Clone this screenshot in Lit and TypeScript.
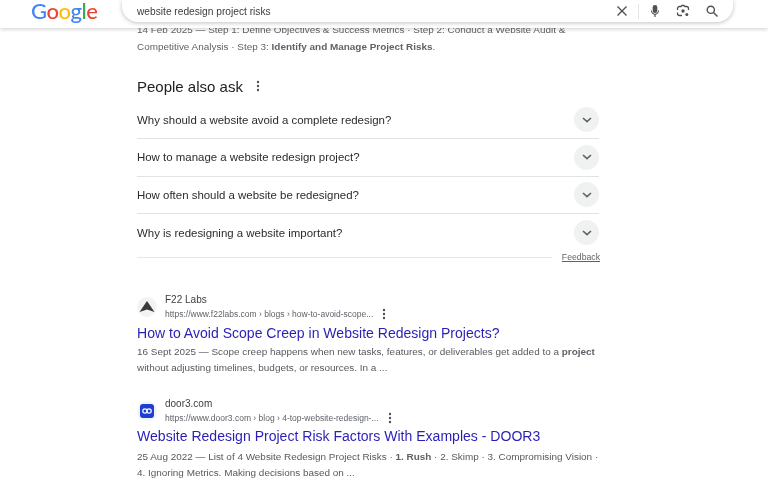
import { LitElement, html, css, svg } from 'lit';
import { customElement } from 'lit/decorators.js';

const questions = [
  'Why should a website avoid a complete redesign?',
  'How to manage a website redesign project?',
  'How often should a website be redesigned?',
  'Why is redesigning a website important?',
];

const dots = svg`<circle cx="2" cy="2" r="1.2"></circle><circle cx="2" cy="6" r="1.2"></circle><circle cx="2" cy="10" r="1.2"></circle>`;

@customElement('app-root')
export class AppRoot extends LitElement {
  static styles = css`
    :host {
      display: block;
      position: relative;
      height: 479px;
      overflow: hidden;
      background: #fff;
      font-family: 'Liberation Sans', Arial, sans-serif;
      color: #202124;
      filter: blur(0.3px);
    }

    /* the search bar sits over the scrolled page */
    .header {
      position: absolute;
      inset: 0 0 auto 0;
      height: 28px;
      background: #fff;
      box-shadow: 0 1px 4px rgba(32, 33, 36, 0.22);
      display: flex;
      align-items: flex-start;
      z-index: 2;
    }
    .logo {
      width: 122px;
      padding: 0 0 0 31px;
      box-sizing: border-box;
      font-family: 'Lato', sans-serif;
      font-size: 22px;
      font-weight: 500;
      line-height: 21px;
      letter-spacing: -0.5px;
      white-space: nowrap;
    }
    .blue { color: #4285f4; }
    .red { color: #ea4335; }
    .yellow { color: #fbbc05; }
    .green { color: #34a853; }
    .search {
      width: 611px;
      height: 22px;
      box-sizing: border-box;
      border-radius: 0 0 16px 16px;
      background: #fff;
      box-shadow: 0 1px 4px rgba(32, 33, 36, 0.28);
      display: flex;
      align-items: center;
      padding: 0 14px 0 15px;
      font-size: 10.2px;
      color: #3c4043;
    }
    .query { flex: 1; }
    .search svg { display: block; }
    .sep {
      width: 1px;
      height: 15px;
      background: #e3e4e6;
      margin: 0 10px 0 9px;
    }
    .icons {
      display: flex;
      align-items: center;
      gap: 15px;
    }

    .main {
      margin-left: 137px;
      width: 462px;
      padding-top: 22px;
    }
    .snippet {
      font-size: 9.93px;
      line-height: 16px;
      color: #55595e;
    }
    .snippet b { font-weight: 700; color: #5f6368; }
    .top { line-height: 16.5px; color: #5f6368; }

    .paa-head {
      display: flex;
      align-items: center;
      gap: 13px;
      margin-top: 17px;
      margin-bottom: 1.5px;
      height: 28px;
      font-size: 15px;
    }
    .paa-head svg { fill: #4d5156; }
    .question {
      display: flex;
      align-items: center;
      justify-content: space-between;
      box-sizing: border-box;
      height: 37.5px;
      border-bottom: 1px solid #e3e3e3;
      font-size: 11.45px;
      color: #2a2b2e;
    }
    .question.last { border-bottom: none; }
    .chev {
      width: 25px;
      height: 25px;
      border-radius: 50%;
      background: #f0f1f1;
      display: flex;
      align-items: center;
      justify-content: center;
    }
    .feedback-row {
      display: flex;
      align-items: center;
      gap: 10px;
      height: 11.5px;
      margin-right: -1px;
    }
    .rule { flex: 1; height: 1px; background: #e8e8e8; }
    .feedback {
      font-size: 8.7px;
      color: #5f6368;
      text-decoration: underline;
    }

    .first { margin-top: 30px; }
    .second { margin-top: 21px; }
    .source {
      display: flex;
      align-items: center;
      gap: 8px;
      height: 28px;
    }
    .fav {
      width: 20px;
      height: 20px;
      border-radius: 50%;
      background: #f1f3f4;
      display: flex;
      align-items: center;
      justify-content: center;
    }
    .site { font-size: 10px; line-height: 14px; color: #3c4043; }
    .url {
      display: flex;
      align-items: center;
      gap: 9px;
      font-size: 8.5px;
      line-height: 14px;
      color: #5f6368;
    }
    .url svg { fill: #4d5156; }
    .title {
      font-size: 14.05px;
      line-height: 20px;
      color: #2a1fb5;
      margin-top: 2px;
      white-space: nowrap;
    }
    .result .snippet { margin-top: 1px; }
    .second .title { margin-top: 1px; }
    .second .snippet { margin-top: 3px; }
  `;

  render() {
    return html`
      <div class="header">
        <div class="logo"><span class="blue">G</span><span class="red">o</span><span class="yellow">o</span><span class="blue">g</span><span class="green">l</span><span class="red">e</span></div>
        <div class="search">
          <span class="query">website redesign project risks</span>
          <svg width="14" height="14" viewBox="0 0 14 14" fill="none" stroke="#4d5156" stroke-width="1.4"><path d="M2.5 2.5l9 9M11.5 2.5l-9 9"></path></svg>
          <span class="sep"></span>
          <div class="icons">
            <svg width="12" height="14" viewBox="0 0 12 14" fill="#4d5156"><rect x="3.700" y="1" width="4.600" height="8" rx="2.300"></rect><path d="M2 6.500h1c0 1.800 1.300 3.200 3 3.200s3-1.400 3-3.200h1c0 2.200-1.500 3.900-3.400 4.200V13H5.400v-2.300C3.500 10.400 2 8.700 2 6.500z"></path></svg>
            <svg width="14" height="14" viewBox="0 0 14 14" fill="none" stroke="#4d5156" stroke-width="1.300"><path d="M1.500 6V4.500a2 2 0 0 1 2-2H5l1-1h2l1 1h1.500a2 2 0 0 1 2 2V6M1.500 8.500v1a2 2 0 0 0 2 2H6M12.500 8.500"></path><circle cx="7" cy="7" r="1.700" fill="#4d5156" stroke="none"></circle><circle cx="10.800" cy="10.500" r="1.500" fill="#4d5156" stroke="none"></circle></svg>
            <svg width="14" height="14" viewBox="0 0 14 14" fill="none" stroke="#4d5156" stroke-width="1.400"><circle cx="5.800" cy="5.800" r="3.600"></circle><path d="M8.500 8.500l4 4"></path></svg>
          </div>
        </div>
      </div>

      <div class="main">
        <div class="snippet top">14 Feb 2025 — Step 1: Define Objectives &amp; Success Metrics · Step 2: Conduct a Website Audit &amp; Competitive Analysis · Step 3: <b>Identify and Manage Project Risks</b>.</div>

        <div class="paa-head">
          People also ask
          <svg width="4" height="12" viewBox="0 0 4 12">${dots}</svg>
        </div>
        ${questions.map(
          (q, i) => html`
            <div class="question ${i === questions.length - 1 ? 'last' : ''}">
              <span>${q}</span>
              <span class="chev">
                <svg width="10" height="6" viewBox="0 0 10 6" fill="none" stroke="#5f6368" stroke-width="1.600"><path d="M1 1l4 3.700L9 1"></path></svg>
              </span>
            </div>
          `
        )}
        <div class="feedback-row">
          <span class="rule"></span>
          <span class="feedback">Feedback</span>
        </div>

        <div class="result first">
          <div class="source">
            <span class="fav">
              <svg width="16" height="12" viewBox="0 0 16 12" fill="#3a3a3a"><path d="M8 0l7.500 11L8 8.500 .5 11z"></path></svg>
            </span>
            <div>
              <div class="site">F22 Labs</div>
              <div class="url">
                <span>https://www.f22labs.com › blogs › how-to-avoid-scope...</span>
                <svg width="4" height="12" viewBox="0 0 4 12">${dots}</svg>
              </div>
            </div>
          </div>
          <div class="title">How to Avoid Scope Creep in Website Redesign Projects?</div>
          <div class="snippet">16 Sept 2025 — Scope creep happens when new tasks, features, or deliverables get added to a <b>project</b> without adjusting timelines, budgets, or resources. In a ...</div>
        </div>

        <div class="result second">
          <div class="source">
            <span class="fav">
              <svg width="14" height="14" viewBox="0 0 14 14"><rect width="14" height="14" rx="3" fill="#1a3fd6"></rect><circle cx="5" cy="7" r="2.200" fill="none" stroke="#fff" stroke-width="1.200"></circle><circle cx="9" cy="7" r="2.200" fill="none" stroke="#fff" stroke-width="1.200"></circle></svg>
            </span>
            <div>
              <div class="site">door3.com</div>
              <div class="url">
                <span>https://www.door3.com › blog › 4-top-website-redesign-...</span>
                <svg width="4" height="12" viewBox="0 0 4 12">${dots}</svg>
              </div>
            </div>
          </div>
          <div class="title">Website Redesign Project Risk Factors With Examples - DOOR3</div>
          <div class="snippet">25 Aug 2022 — List of 4 Website Redesign Project Risks · <b>1. Rush</b> · 2. Skimp · 3. Compromising Vision · 4. Ignoring Metrics. Making decisions based on ...</div>
        </div>
      </div>
    `;
  }
}
